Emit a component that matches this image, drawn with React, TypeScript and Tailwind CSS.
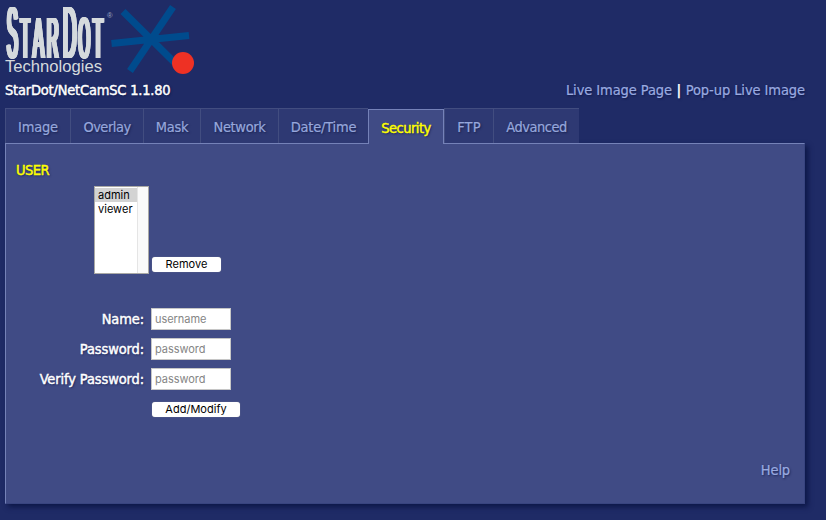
import type { ReactNode } from "react";

const tabs = [
  { label: "Image", width: "w-[65px] tracking-[-0.200px]" },
  { label: "Overlay", width: "w-[73px] tracking-[-0.500px]" },
  { label: "Mask", width: "w-[57px] tracking-[-0.250px]" },
  { label: "Network", width: "w-[78px] tracking-[-0.350px]" },
  { label: "Date/Time", width: "w-[90px] tracking-[-0.200px]" },
  { label: "Security", width: "w-[76px] tracking-[-0.500px]", active: true },
  { label: "FTP", width: "w-[49px] tracking-[0.200px]" },
  { label: "Advanced", width: "w-[86px] tracking-[-0.500px]" },
];

const heavy = "[-webkit-text-stroke:0.45px_currentColor]";
const light = "[-webkit-text-stroke:0.2px_currentColor]";

function Logo() {
  return (
    <svg width="200" height="80" viewBox="0 0 200 80" className="block shrink-0">
      <g stroke="#004b8d" strokeWidth="7">
        <path d="M123 11.500 L175 63 M173 7 L130 71 M111.500 43.500 L189 35.500" />
      </g>
      <circle cx="183" cy="63" r="11" fill="#ee3124" />
      <g
        fill="#d5dadd"
        fontFamily="'Liberation Sans', sans-serif"
        className="[filter:drop-shadow(1px_0_0_#d5dadd)_drop-shadow(1px_0_0_#d5dadd)_drop-shadow(1px_0_0_#d5dadd)_drop-shadow(0.5px_0_0_#d5dadd)]"
      >
        <text transform="translate(5.500 58) scale(.225 1)" fontSize="72">S</text>
        <text transform="translate(19 58) scale(.27 1)" fontSize="57">T</text>
        <text transform="translate(31.500 58) scale(.29 1)" fontSize="57">A</text>
        <text transform="translate(45.500 58) scale(.28 1)" fontSize="57">R</text>
        <text transform="translate(61.500 58) scale(.25 1)" fontSize="75">D</text>
        <text transform="translate(77 58) scale(.26 1)" fontSize="57">O</text>
        <text transform="translate(91.500 58) scale(.29 1)" fontSize="57">T</text>
      </g>
      <text x="5" y="71.500" fontSize="16.500" textLength="97" lengthAdjust="spacingAndGlyphs" fill="#d5dadd" fontFamily="'Liberation Sans', sans-serif">
        Technologies
      </text>
      <text x="107" y="18" fontSize="7.500" fill="#a3abc2" fontFamily="'Liberation Sans', sans-serif">®</text>
    </svg>
  );
}

function Label({ children }: { children: ReactNode }) {
  return (
    <label className={`w-[138px] text-right tracking-[-0.120px] text-white [text-shadow:1px_1px_2px_#1a2456] ${heavy}`}>
      {children}
    </label>
  );
}

function Field({ label, placeholder }: { label: string; placeholder: string }) {
  return (
    <div className="flex h-[30px] items-center">
      <Label>{label}</Label>
      <input
        placeholder={placeholder}
        className="ml-[7px] h-[22px] w-20 border border-[#c6c6c6] bg-white px-[3px] font-['Inter',sans-serif] text-[11px] tracking-[-0.050px] placeholder:text-[#858585]"
      />
    </div>
  );
}

const button =
  "rounded-[3px] bg-white pb-[2px] font-['Inter',sans-serif] text-[11px] leading-[14px] tracking-[0.020px] text-black shadow-[0_0_1px_#999]";

export default function App() {
  return (
    <div className="h-[520px] w-[826px] overflow-hidden bg-[#1f2b66] font-['DejaVu_Sans_Condensed','DejaVu_Sans',sans-serif] text-[14.5px] leading-[20px] [font-stretch:condensed]">
      <Logo />
      <header className="flex h-7 w-[805px] justify-between pl-[5px] text-[#9aabe0] [text-shadow:1px_1px_2px_#10194a]">
        <span className={`tracking-[-0.200px] text-white ${heavy}`}>StarDot/NetCamSC 1.1.80</span>
        <nav className={`flex gap-[4.5px] tracking-[-0.080px] ${light}`}>
          <a>Live Image Page</a>
          <b className="text-white">|</b>
          <a>Pop-up Live Image</a>
        </nav>
      </header>
      <nav className="relative z-10 flex h-9 pl-[5px]">
        {tabs.map((t) => (
          <div
            key={t.label}
            className={`flex justify-center pt-[8px] [text-shadow:1px_1px_2px_#182150] ${t.width} ${
              t.active
                ? `mt-px h-[35px] border-t border-r border-l border-[#7582b8] bg-[#404b85] text-[#ffff00] ${heavy}`
                : `h-[35px] border-t border-l border-[#424d80] bg-[#2e3973] text-[#96a7dc] ${light}`
            }`}
          >
            {t.label}
          </div>
        ))}
      </nav>
      <main className="-mt-px ml-[5px] flex h-[361px] w-[800px] flex-col border border-t-[#7582b8] border-r-[#38447f] border-b-[#38447f] border-l-[#7582b8] bg-[#404b85] shadow-[3px_3px_5px_#0d1748]">
        <h1 className={`mt-4 ml-[10px] h-[26px] tracking-[-0.500px] text-[#ffff00] [text-shadow:1px_1px_2px_#1a2456] ${heavy}`}>USER</h1>
        <div className="ml-[88px] flex h-[118px] items-start">
          <div className="flex h-[88px] w-[55px] border border-[#aaa9a5] bg-white font-['Inter',sans-serif] text-[11px] leading-[14px] tracking-[0.020px] text-black">
            <div className="flex-1 pt-px">
              <div className="bg-[#d3d3d3] pl-[3px]">admin</div>
              <div className="pl-[3px] whitespace-nowrap">viewer</div>
            </div>
            <div className="w-[11px] border-l border-[#e5e5e5] bg-[#fafafa]" />
          </div>
          <button className={`mt-[71px] ml-[3px] h-[15px] w-[69px] ${button}`}>Remove</button>
        </div>
        <Field label="Name:" placeholder="username" />
        <Field label="Password:" placeholder="password" />
        <Field label="Verify Password:" placeholder="password" />
        <button className={`mt-[8px] ml-[146px] h-[15px] w-[88px] shrink-0 ${button}`}>Add/Modify</button>
        <a className={`mt-auto mr-[14px] mb-[23px] self-end tracking-[-0.150px] text-[#9aabe0] [text-shadow:1px_1px_2px_#1a2456] ${light}`}>Help</a>
      </main>
    </div>
  );
}
